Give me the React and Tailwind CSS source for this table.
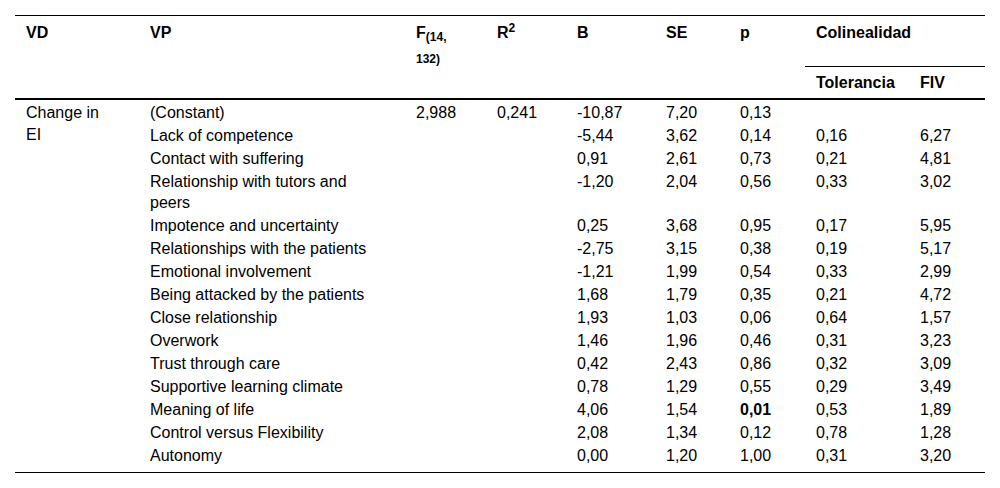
const rows = [
  ['(Constant)', '2,988', '0,241', '-10,87', '7,20', '0,13', '', ''],
  ['Lack of competence', '', '', '-5,44', '3,62', '0,14', '0,16', '6,27'],
  ['Contact with suffering', '', '', '0,91', '2,61', '0,73', '0,21', '4,81'],
  ['Relationship with tutors and peers', '', '', '-1,20', '2,04', '0,56', '0,33', '3,02'],
  ['Impotence and uncertainty', '', '', '0,25', '3,68', '0,95', '0,17', '5,95'],
  ['Relationships with the patients', '', '', '-2,75', '3,15', '0,38', '0,19', '5,17'],
  ['Emotional involvement', '', '', '-1,21', '1,99', '0,54', '0,33', '2,99'],
  ['Being attacked by the patients', '', '', '1,68', '1,79', '0,35', '0,21', '4,72'],
  ['Close relationship', '', '', '1,93', '1,03', '0,06', '0,64', '1,57'],
  ['Overwork', '', '', '1,46', '1,96', '0,46', '0,31', '3,23'],
  ['Trust through care', '', '', '0,42', '2,43', '0,86', '0,32', '3,09'],
  ['Supportive learning climate', '', '', '0,78', '1,29', '0,55', '0,29', '3,49'],
  ['Meaning of life', '', '', '4,06', '1,54', '0,01', '0,53', '1,89'],
  ['Control versus Flexibility', '', '', '2,08', '1,34', '0,12', '0,78', '1,28'],
  ['Autonomy', '', '', '0,00', '1,20', '1,00', '0,31', '3,20'],
];

export default function App() {
  return (
    <div className="w-[1000px] h-[488px] bg-white pt-[15px] pl-[15px] font-['Liberation_Sans',Arial,sans-serif] text-[16px] text-black">
      <table className="w-[970px] table-fixed border-collapse">
        <colgroup>
          <col className="w-[124px]" />
          <col className="w-[266px]" />
          <col className="w-[81px]" />
          <col className="w-[80px]" />
          <col className="w-[89px]" />
          <col className="w-[74px]" />
          <col className="w-[76px]" />
          <col className="w-[104px]" />
          <col className="w-[76px]" />
        </colgroup>
        <thead className="border-t border-black">
          <tr className="h-[51px]">
            <th rowSpan={2} className="align-top text-left font-bold px-[11px] pt-[6px] leading-[21px]">VD</th>
            <th rowSpan={2} className="align-top text-left font-bold px-[11px] pt-[6px] leading-[21px]">VP</th>
            <th rowSpan={2} className="align-top text-left font-bold px-[11px] pt-[6px] leading-[21px]">
              <div className="w-[46px] leading-[22px]">
                F<sub className="text-[12px]">(14, 132)</sub>
              </div>
            </th>
            <th rowSpan={2} className="align-top text-left font-bold px-[11px] pt-[6px] leading-[21px]">
              R<sup className="text-[12px]">2</sup>
            </th>
            <th rowSpan={2} className="align-top text-left font-bold px-[11px] pt-[6px] leading-[21px]">B</th>
            <th rowSpan={2} className="align-top text-left font-bold px-[11px] pt-[6px] leading-[21px]">SE</th>
            <th rowSpan={2} className="align-top text-left font-bold px-[11px] pt-[6px] leading-[21px]">p</th>
            <th colSpan={2} className="align-top text-left font-bold px-[11px] pt-[6px] leading-[21px] border-b border-black">
              Colinealidad
            </th>
          </tr>
          <tr className="h-[32px] border-b-2 border-black">
            <th className="text-left font-bold px-[11px] leading-[21px]">Tolerancia</th>
            <th className="text-left font-bold px-[11px] leading-[21px]">FIV</th>
          </tr>
        </thead>
        <tbody className="border-b border-black">
          {rows.map((r, i) => {
            const last = i === rows.length - 1;
            const cell = `align-top text-left px-[11px] leading-[21px] ${i === 0 ? 'pt-[2px]' : 'pt-[1px]'} ${last ? 'pb-[6px]' : 'pb-[1px]'}`;
            return (
              <tr key={i}>
                {i === 0 && (
                  <td rowSpan={rows.length} className="align-top text-left px-[11px] pt-[2px] leading-[22px]">
                    <div className="w-[80px]">Change in EI</div>
                  </td>
                )}
                <td className={cell}>
                  <div className="w-[220px]">{r[0]}</div>
                </td>
                {r.slice(1).map((v, j) => (
                  <td key={j} className={`${cell} ${j === 4 && v === '0,01' ? 'font-bold' : 'font-normal'}`}>
                    {v}
                  </td>
                ))}
              </tr>
            );
          })}
        </tbody>
      </table>
    </div>
  );
}
